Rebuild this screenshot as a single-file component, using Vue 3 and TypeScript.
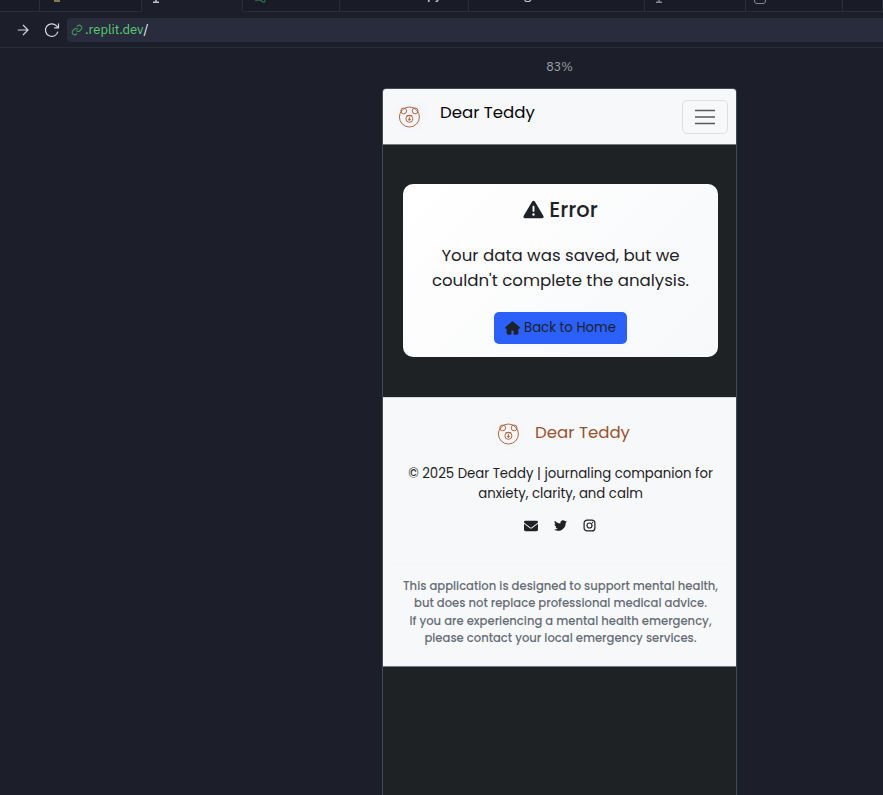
<script setup lang="ts">
interface Tab {
  width: number
  icon?: 'file' | 'console' | 'shell' | 'window'
  label?: string
  active?: boolean
}

const tabs: Tab[] = [
  { width: 40 },
  { width: 102, icon: 'file' },
  { width: 101, icon: 'console', active: true },
  { width: 97, icon: 'shell' },
  { width: 129, label: 'py' },
  { width: 176, label: 'g' },
  { width: 101, icon: 'console' },
  { width: 97, icon: 'window' },
  { width: 40 },
]

const disclaimer: string[] = [
  'This application is designed to support mental health,',
  'but does not replace professional medical advice.',
  'If you are experiencing a mental health emergency,',
  'please contact your local emergency services.',
]
</script>

<template>
  <div class="workspace">
    <div class="tabs">
      <div v-for="(tab, i) in tabs" :key="i" class="tab" :class="{ active: tab.active }" :style="{ width: tab.width + 'px' }">
        <i v-if="tab.icon === 'file'" class="file-icon"></i>
        <svg v-else-if="tab.icon === 'console'" class="console-icon" width="8" height="4" viewBox="0 0 8 4"><path d="M4 0v2M1 2.2h6" /></svg>
        <svg v-else-if="tab.icon === 'shell'" class="shell-icon" width="12" height="4" viewBox="0 0 12 4"><path d="M0 .3h4.500M5 0l3 1.900c1.500.6 2.400-.4 1.800-1.900" /></svg>
        <i v-else-if="tab.icon === 'window'" class="window-icon"></i>
        <span v-if="tab.label" class="tab-label" :class="'label-' + tab.label">{{ tab.label }}</span>
      </div>
    </div>

    <div class="toolbar">
      <svg class="forward" width="12" height="12" viewBox="0 0 12 12"><path d="M.8 6h10M6 1l5 5-5 5" /></svg>
      <svg class="reload" width="16" height="16" viewBox="0 0 16 16"><path d="M13.900 9.600A6.300 6.300 0 1 1 12.300 3.700L14.500 5.900M14.500 1.600v4.300h-4.300" /></svg>
      <div class="address">
        <svg width="12" height="12" viewBox="0 0 24 24"><path d="M10 13a5 5 0 0 0 7.500.5l3-3a5 5 0 0 0-7-7L11.800 5.200M14 11a5 5 0 0 0-7.500-.5l-3 3a5 5 0 0 0 7 7l1.700-1.700" /></svg>
        <span class="host">.replit.dev</span><span>/</span>
      </div>
    </div>

    <div class="zoom">83%</div>

    <div class="phone">
      <header class="navbar">
        <svg class="bear nav-bear" width="22" height="23" viewBox="0 0 22 23">
          <circle cx="11.400" cy="12" r="10" />
          <circle cx="5.700" cy="5.900" r="2.900" /><circle cx="17.100" cy="5.900" r="2.900" />
          <circle cx="11.400" cy="13.800" r="3.500" /><path d="M8.500 10.700h5.800M11.400 12v3.500M9.900 14l1.500 1.500 1.500-1.500" />
        </svg>
        <span class="brand">Dear Teddy</span>
        <button class="menu" aria-label="Menu">
          <svg width="20" height="16" viewBox="0 0 20 16"><path d="M0 1.500h20M0 8h20M0 14.500h20" /></svg>
        </button>
      </header>

      <main class="content">
        <section class="card">
          <h1>
            <svg width="21" height="19" viewBox="0 0 512 480"><path d="M256 16c14 0 27 7 35 20l216 368c7 12 7 27 0 40s-20 20-34 20H40c-14 0-27-8-34-20s-7-28 0-40L222 36c7-13 20-20 34-20zm0 128c-13 0-24 11-24 24v112c0 13 11 24 24 24s24-11 24-24V168c0-13-11-24-24-24zm32 224a32 32 0 1 0-64 0 32 32 0 1 0 64 0z" /></svg>
            <span>Error</span>
          </h1>
          <p class="message">
            <span>Your data was saved, but we</span>
            <span>couldn't complete the analysis.</span>
          </p>
          <a class="home">
            <svg width="15" height="14" viewBox="0 0 576 512"><path d="M575.800 255.500c0 18-15 32.100-32 32.100h-32l.7 160.200c.2 35.500-28.500 64.300-64 64.300H360c-18 0-32-14-32-32V352h-80v128c0 18-14 32-32 32h-88c-35 0-64-29-64-64V287.600H32c-18 0-32-14-32-32.100 0-9 3-17 10-24L266.400 8c7-7 15-8 22-8s15 2 21 7l255.400 224.500c8 7 12 15 11 24z" /></svg>
            <span>Back to Home</span>
          </a>
        </section>
      </main>

      <footer class="footer">
        <div class="footer-brand">
          <svg class="bear" width="22" height="23" viewBox="0 0 22 23">
            <circle cx="11.400" cy="12" r="10" />
            <circle cx="5.700" cy="5.900" r="2.900" /><circle cx="17.100" cy="5.900" r="2.900" />
            <circle cx="11.400" cy="13.800" r="3.500" /><path d="M8.500 10.700h5.800M11.400 12v3.500M9.900 14l1.500 1.500 1.500-1.500" />
          </svg>
          <span class="brand">Dear Teddy</span>
        </div>
        <p class="copyright">
          <span>© 2025 Dear Teddy | journaling companion for</span>
          <span>anxiety, clarity, and calm</span>
        </p>
        <div class="social">
          <svg width="14" height="14" viewBox="0 0 512 512"><path d="M48 64C21.500 64 0 85.500 0 112c0 15 7 29 19 38l218 164c11 9 27 9 38 0l218-164c12-9 19-23 19-38 0-26.500-21.500-48-48-48zM0 176v208c0 35 29 64 64 64h384c35 0 64-29 64-64V176L294 339c-22 17-53 17-76 0z" /></svg>
          <svg width="13" height="13" viewBox="0 0 512 512"><path d="M459.400 151.700c.3 4.500.3 9.100.3 13.600 0 138.700-105.600 298.600-298.600 298.600-59.500 0-114.700-17.200-161.100-47.100 8.400 1 16.600 1.300 25.300 1.300 49.100 0 94.200-16.600 130.300-44.800-46.100-1-84.800-31.200-98.100-72.800 6.500 1 13 1.600 19.800 1.600 9.400 0 18.800-1.300 27.600-3.600-48.100-9.700-84.100-52-84.100-103v-1.300c14 7.800 30.200 12.700 47.400 13.300-28.300-18.800-46.800-51-46.800-87.400 0-19.500 5.200-37.400 14.300-53 51.700 63.700 129.300 105.300 216.400 109.800-1.600-7.800-2.600-15.900-2.600-24 0-57.800 46.800-104.900 104.900-104.900 30.200 0 57.500 12.700 76.700 33.100 23.700-4.500 46.500-13.300 66.600-25.300-7.800 24.400-24.400 44.800-46.100 57.800 21.100-2.300 41.600-8.100 60.400-16.200-14.300 20.800-32.200 39.300-52.600 54.300z" /></svg>
          <svg class="insta" width="13" height="13" viewBox="0 0 13 13"><rect x="1.100" y="1.100" width="10.800" height="10.800" rx="3" /><circle cx="6.500" cy="6.500" r="2.500" /><circle class="dot" cx="9.500" cy="3.500" r=".7" /></svg>
        </div>
        <p class="disclaimer">
          <span v-for="line in disclaimer" :key="line">{{ line }}</span>
        </p>
      </footer>
    </div>
  </div>
</template>

<style>
body {
  margin: 0;
  background: #1c1f2a;
}
</style>

<style scoped>
* {
  box-sizing: border-box;
}
.workspace {
  width: 883px;
  height: 795px;
  overflow: hidden;
  background: #1c1f2a;
  font-family: Poppins, Inter, sans-serif;
}
svg {
  display: block;
  flex: none;
}
.tabs {
  display: flex;
  height: 12px;
  overflow: hidden;
}
.tab {
  flex: none;
  height: 12px;
  overflow: hidden;
  border-right: 1px solid #2a2e3b;
  border-bottom: 1px solid #2a2e3b;
  background: #191c27;
}
.tab.active {
  border-bottom-color: #1c1f2a;
  background: #1c1f2a;
}
.file-icon {
  display: block;
  width: 6px;
  height: 2px;
  margin-left: 14px;
  background: #817a4d;
}
.console-icon {
  margin-left: 10px;
  fill: none;
  stroke: #858891;
  stroke-width: 1.5;
}
.active .console-icon {
  stroke: #c0c2ca;
}
.shell-icon {
  margin-left: 12px;
  fill: none;
  stroke: #36764d;
  stroke-width: 1.1;
}
.window-icon {
  display: block;
  width: 12px;
  height: 12px;
  margin: -8px 0 0 8px;
  border: 1px solid #858891;
  border-radius: 3px;
}
.tab-label {
  display: block;
  margin-top: -13px;
  font: 500 13px/16px 'IBM Plex Sans', Inter, sans-serif;
  color: #c5c7cf;
}
.label-py {
  padding-left: 87px;
}
.label-g {
  padding-left: 55px;
}
.toolbar {
  display: flex;
  align-items: center;
  height: 36px;
  padding-left: 17px;
  border-bottom: 1px solid #2a2e3b;
}
.forward,
.reload {
  fill: none;
  stroke: #d4d6dc;
  stroke-width: 1.2;
}
.reload {
  margin-left: 15px;
}
.address {
  display: flex;
  flex: 1;
  align-items: center;
  height: 24px;
  margin-left: 7px;
  padding-left: 4px;
  border-radius: 4px 0 0 4px;
  background: #282c3c;
  color: #f2f3f6;
  font: 13px/24px 'IBM Plex Sans', Inter, sans-serif;
}
.address svg {
  margin-right: 2px;
  fill: none;
  stroke: #48965c;
  stroke-width: 2.2;
}
.host {
  color: #59cf76;
}
.zoom {
  width: 353px;
  height: 40px;
  margin-left: 383px;
  color: #9c9fa6;
  font: 12.500px/36px 'IBM Plex Sans', Roboto, sans-serif;
  text-align: center;
}
.phone {
  width: 355px;
  height: 720px;
  margin-left: 382px;
  overflow: hidden;
  border: 1px solid #444958;
  border-radius: 4px;
  background: #1e2224;
  color: #1e2226;
}
.navbar {
  display: flex;
  height: 56px;
  padding: 0 8px 0 15px;
  border-bottom: 1px solid #777b7d;
  background: #f7f8fa;
}
.bear {
  fill: none;
  overflow: visible;
  stroke: #a9623c;
  stroke-width: .95;
  filter: drop-shadow(0 0 6px #e2e6f5);
}
.footer-brand .bear {
  filter: drop-shadow(0 0 6px #f4efec);
}
.nav-bear {
  margin-top: 16px;
}
.brand {
  font-size: 16.600px;
  line-height: 25px;
  white-space: nowrap;
}
.navbar .brand {
  margin: 11px 0 0 20px;
  color: #050505;
}
.menu {
  display: grid;
  place-items: center;
  width: 46px;
  height: 34px;
  margin: 11px 0 0 auto;
  padding: 0;
  border: 1px solid #dedfe1;
  border-radius: 5px;
  background: transparent;
}
.menu svg {
  stroke: #56585a;
  stroke-width: 1.600;
}
.content {
  height: 252px;
  padding: 39px 18px 0 20px;
}
.card {
  display: flex;
  flex-direction: column;
  align-items: center;
  height: 173px;
  padding-top: 13px;
  border-radius: 10px;
  background: linear-gradient(135deg, #ffffff, #f7f8fa);
}
h1 {
  display: flex;
  gap: 5px;
  align-items: center;
  height: 26px;
  margin: 0;
  font-size: 21px;
  font-weight: 500;
  line-height: 26px;
}
h1 svg {
  margin-top: -2px;
}
.card svg {
  fill: #1e2226;
}
p {
  margin: 0;
}
p span {
  display: block;
  white-space: nowrap;
}
.message {
  margin-top: 20px;
  font-size: 16.600px;
  line-height: 25px;
  text-align: center;
}
.home {
  display: flex;
  gap: 4px;
  align-items: center;
  justify-content: center;
  width: 133px;
  height: 31.500px;
  margin-top: 19px;
  border-radius: 5px;
  background: #2b60fb;
  font-size: 13.280px;
  white-space: nowrap;
}
.footer {
  display: flex;
  flex-direction: column;
  align-items: center;
  height: 270px;
  border-top: 1px solid #d9d9d9;
  border-bottom: 1px solid #777b7d;
  background: #f7f8fa;
  text-align: center;
}
.footer-brand {
  display: flex;
  gap: 16px;
  height: 48px;
  margin-top: 22px;
  padding-left: 8px;
  color: #985230;
}
.footer-brand .bear {
  margin-top: 2px;
}
.copyright {
  margin-top: -4px;
  padding-left: 2px;
  font-size: 13.280px;
  line-height: 20px;
}
.social {
  display: flex;
  gap: 16px;
  align-items: center;
  height: 14px;
  margin-top: 14.500px;
  padding-left: 1px;
}
.social svg {
  fill: #1e2226;
}
.social .insta {
  fill: none;
  stroke: #1e2226;
  stroke-width: 1.200;
}
.social .dot {
  fill: #1e2226;
  stroke: none;
}
.disclaimer {
  width: 335px;
  margin-top: 30.500px;
  padding: 14px 0 0 2px;
  border-top: 1px solid #f5f5f5;
  color: #656d74;
  font-size: 11.620px;
  font-weight: 500;
  line-height: 17.400px;
}
</style>
